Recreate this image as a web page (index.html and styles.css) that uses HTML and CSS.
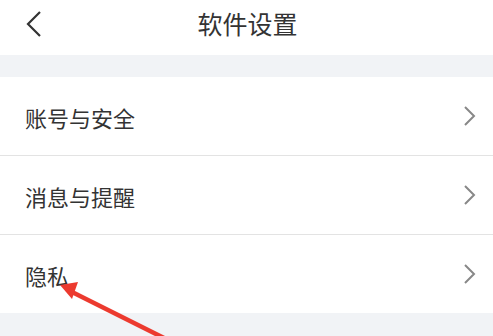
FILE: index.html
```html
<!DOCTYPE html>
<html lang="zh">
<head>
  <meta charset="UTF-8">
  <meta name="viewport" content="width=device-width, initial-scale=1.0">
  <title>软件设置</title>
  <link rel="stylesheet" href="styles.css">
</head>
<body>
  <div class="header">
    <span class="back">
      <svg width="18" height="28" viewBox="0 0 18 28"><polyline points="15,2 3,14 15,26" fill="none" stroke="#333" stroke-width="2.2"/></svg>
    </span>
    <h1>软件设置</h1>
  </div>

  <div class="gap"></div>

  <!-- Lista de opciones -->
  <div class="list">
    <div class="item">
      <span>账号与安全</span>
      <svg class="chevron" width="16" height="22" viewBox="0 0 16 22"><polyline points="3,2 12,11 3,20" fill="none" stroke="#888" stroke-width="2"/></svg>
    </div>
    <div class="item">
      <span>消息与提醒</span>
      <svg class="chevron" width="16" height="22" viewBox="0 0 16 22"><polyline points="3,2 12,11 3,20" fill="none" stroke="#888" stroke-width="2"/></svg>
    </div>
    <div class="item">
      <span>隐私</span>
      <svg class="chevron" width="16" height="22" viewBox="0 0 16 22"><polyline points="3,2 12,11 3,20" fill="none" stroke="#888" stroke-width="2"/></svg>
    </div>
  </div>

  <div class="gap"></div>

  <!-- Flecha roja -->
  <svg class="pointer" width="493" height="336" viewBox="0 0 493 336">
    <line x1="168" y1="340" x2="70" y2="291" stroke="#ec3a2f" stroke-width="4.5" stroke-linecap="round"/>
    <polygon points="60,285 78,282 72,299" fill="#ec3a2f"/>
  </svg>
</body>
</html>
```

FILE: styles.css
```css
body {
  margin: 0;
  font-family: "Noto Sans CJK SC", "Noto Sans", sans-serif;
  background-color: #f1f3f6;
  color: #333;
  width: 493px;
  height: 336px;
  overflow: hidden;
  position: relative;
}

.header {
  height: 55px;
  background-color: #fff;
  display: flex;
  align-items: flex-start;
  justify-content: center;
  position: relative;
}

.header h1 {
  margin: 5px 0 0 2px;
  font-size: 25px;
  line-height: 36px;
  font-weight: normal;
  color: #333;
}

.back {
  position: absolute;
  left: 25px;
  top: 10px;
  height: 28px;
}

.gap {
  height: 22px;
}

.list {
  background-color: #fff;
}

.item {
  height: 78px;
  display: flex;
  align-items: center;
  justify-content: space-between;
  padding: 0 15px 0 25px;
  font-size: 22px;
  border-bottom: 1px solid #e3e3e3;
}

.item:last-child {
  border-bottom: none;
}

.item span {
  margin-top: 1px;
}

.pointer {
  position: absolute;
  left: 0;
  top: 0;
}
```
